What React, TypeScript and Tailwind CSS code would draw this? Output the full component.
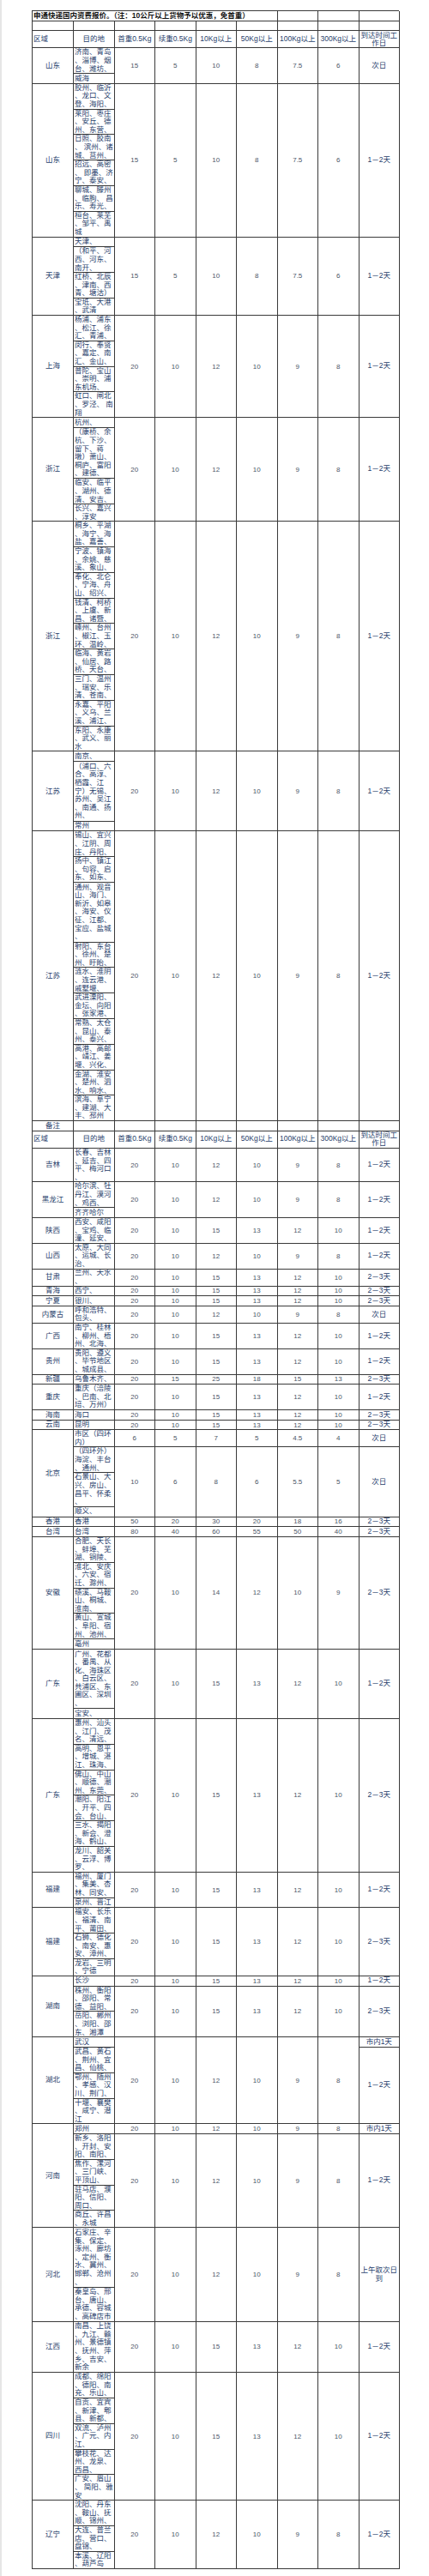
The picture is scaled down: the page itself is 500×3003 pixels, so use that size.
import React from "react";

type Box = string[];

interface SubRow {
  boxes: Box[];
  values: string[];
  timeSplit?: [string, string];
}

interface Section {
  region: string;
  rows: SubRow[];
}

// height of a destination box by its number of text lines
const boxHeight: Record<number, string> = {
  1: "h-[11.7px]",
  2: "h-[20px]",
  3: "h-[29.8px]",
  4: "h-[39.7px]",
  6: "h-[59.6px]",
  7: "h-[69.6px]",
};

const v = (s: string) => s.split(" ");

const A = v("20 10 12 10 9 8 1－2天");
const B = v("20 10 15 13 12 10 1－2天");
const C = v("20 10 15 13 12 10 2－3天");

const sectionsTop: Section[] = [
  {
    region: "山东",
    rows: [
      {
        boxes: [["济南、青岛", "、淄博、烟", "台、潍坊、"], ["威海"]],
        values: v("15 5 10 8 7.5 6 次日"),
      },
    ],
  },
  {
    region: "山东",
    rows: [
      {
        boxes: [
          ["胶州、临沂", "、龙口、文", "登、海阳、"],
          ["莱阳、枣庄", "、安丘、德", "州、东营、"],
          ["日照、胶南", "、 滨州、诸", "城、莒州、"],
          ["招远、高密", "、 即墨、济", "宁、泰安、"],
          ["聊城、滕州", "、临朐、 昌", "乐、寿光、"],
          ["桓台、莱芜", "、邹平、禹", "城"],
        ],
        values: v("15 5 10 8 7.5 6 1－2天"),
      },
    ],
  },
  {
    region: "天津",
    rows: [
      {
        boxes: [
          ["天津、"],
          ["（和平、河", "西、河东、", "南开、"],
          ["红桥、北辰", "、津南、西", "青、塘沽）"],
          ["宝坻、大港", "、武清"],
        ],
        values: v("15 5 10 8 7.5 6 1－2天"),
      },
    ],
  },
  {
    region: "上海",
    rows: [
      {
        boxes: [
          ["杨浦、浦东", "、松江、徐", "汇、青浦、"],
          ["闵行、奉贤", "、嘉定、南", "汇、金山、"],
          ["普陀、宝山", "、崇明、浦", "东机场、"],
          ["虹口、闸北", "、罗泾、 南", "翔"],
        ],
        values: A,
      },
    ],
  },
  {
    region: "浙江",
    rows: [
      {
        boxes: [
          ["杭州、"],
          ["（康桥、余", "杭、下沙、", "留下、蒋", "墩）萧山、", "桐庐、富阳", "、建德、"],
          ["临安、临平", "、湖州、德", "清、安吉、"],
          ["长兴、嘉兴", "、淳安"],
        ],
        values: A,
      },
    ],
  },
  {
    region: "浙江",
    rows: [
      {
        boxes: [
          ["桐乡、平湖", "、海宁、海", "盐、嘉善、"],
          ["宁波、镇海", "、余姚、慈", "溪、象山、"],
          ["奉化、北仑", "、宁海、舟", "山、绍兴、"],
          ["钱清、柯桥", "、上虞、新", "昌、诸暨、"],
          ["嵊州、台州", "、椒江、玉", "环、温岭、"],
          ["临海、黄岩", "、仙居、路", "桥、天台、"],
          ["三门、温州", "、瑞安、乐", "清、苍南、"],
          ["永嘉、平阳", "、义乌、兰", "溪、浦江、"],
          ["东阳、永康", "、武义、丽", "水"],
        ],
        values: A,
      },
    ],
  },
  {
    region: "江苏",
    rows: [
      {
        boxes: [
          ["南京、"],
          ["（浦口、六", "合、高淳、", "栖霞、江", "宁）无锡、", "苏州、吴江", "、南通、扬", "州、"],
          ["常州"],
        ],
        values: A,
      },
    ],
  },
  {
    region: "江苏",
    rows: [
      {
        boxes: [
          ["锡山、宜兴", "、江阴、周", "庄、丹阳、"],
          ["扬中、镇江", "、句容、启", "东、如东、"],
          ["通州、观音", "山、海门、", "新沂、如皋", "、海安、仪", "征、江都、", "宝应、盐城", "、"],
          ["射阳、东台", "、徐州、楚", "州、盱眙、"],
          ["涟水、淮阴", "、连云港、", "戚墅堰、"],
          ["武进溧阳、", "金坛、向阳", "、张家港、"],
          ["常熟、太仓", "、昆山、泰", "州、泰兴、"],
          ["高港、高邮", "、靖江、姜", "堰、兴化、"],
          ["金湖、淮安", "、楚州、泗", "水、响水、"],
          ["滨海、阜宁", "、建湖、大", "丰、邳州"],
        ],
        values: A,
      },
    ],
  },
];

const sectionsBottom: Section[] = [
  { region: "吉林", rows: [{ boxes: [["长春、吉林", "、延吉、四", "平、梅河口", "、"]], values: A }] },
  {
    region: "黑龙江",
    rows: [{ boxes: [["哈尔滨、牡", "丹江、漠河", "、鸡西、"], ["齐齐哈尔"]], values: A }],
  },
  { region: "陕西", rows: [{ boxes: [["西安、咸阳", "、宝鸡、临", "潼、延安、"]], values: B }] },
  { region: "山西", rows: [{ boxes: [["太原、大同", "、运城、长", "治、"]], values: A }] },
  { region: "甘肃", rows: [{ boxes: [["兰州、天水", "、"]], values: C }] },
  { region: "青海", rows: [{ boxes: [["西宁、"]], values: C }] },
  { region: "宁夏", rows: [{ boxes: [["银川、"]], values: C }] },
  { region: "内蒙古", rows: [{ boxes: [["呼和浩特、", "包头、"]], values: v("20 10 12 10 9 8 次日") }] },
  { region: "广西", rows: [{ boxes: [["南宁、桂林", "、柳州、梧", "州、北海、"]], values: B }] },
  { region: "贵州", rows: [{ boxes: [["贵阳、遵义", "、毕节地区", "、城成县、"]], values: B }] },
  { region: "新疆", rows: [{ boxes: [["乌鲁木齐、"]], values: v("20 15 25 18 15 13 2－3天") }] },
  { region: "重庆", rows: [{ boxes: [["重庆（涪陵", "、巴南、北", "培、万州）"]], values: B }] },
  { region: "海南", rows: [{ boxes: [["海口"]], values: C }] },
  { region: "云南", rows: [{ boxes: [["昆明"]], values: C }] },
  {
    region: "北京",
    rows: [
      { boxes: [["市区（四环", "内）"]], values: v("6 5 7 5 4.5 4 次日") },
      {
        boxes: [
          ["（四环外）", "海淀、丰台", "、通州、"],
          ["石景山、大", "兴、房山、", "昌平、怀柔", "、"],
          ["顺义、"],
        ],
        values: v("10 6 8 6 5.5 5 次日"),
      },
    ],
  },
  { region: "香港", rows: [{ boxes: [["香港"]], values: v("50 20 30 20 18 16 2－3天") }] },
  { region: "台湾", rows: [{ boxes: [["台湾"]], values: v("80 40 60 55 50 40 2－3天") }] },
  {
    region: "安徽",
    rows: [
      {
        boxes: [
          ["合肥、天长", "、蚌埠、芜", "湖、铜陵、"],
          ["淮北、安庆", "、六安、宿", "迁、滁州、"],
          ["绩溪、马鞍", "山、桐城、", "淮南、"],
          ["黄山、宣城", "、阜阳、宿", "州、池州、"],
          ["亳州"],
        ],
        values: v("20 10 14 12 10 9 2－3天"),
      },
    ],
  },
  {
    region: "广东",
    rows: [
      {
        boxes: [
          ["广州、花都", "、番禺、从", "化、海珠区", "、白云区、", "共浦区、东", "圃区、深圳", "、"],
          ["宝安、"],
        ],
        values: B,
      },
    ],
  },
  {
    region: "广东",
    rows: [
      {
        boxes: [
          ["惠州、汕头", "、江门、茂", "名、清远、"],
          ["高明、恩平", "、增城、湛", "江、珠海、"],
          ["佛山、中山", "、顺德、潮", "州、东莞、"],
          ["潮阳、阳江", "、开平、四", "会、台山、"],
          ["三水、揭阳", "、新会、澄", "海、鹤山、"],
          ["龙川、韶关", "、云浮、博", "罗、"],
        ],
        values: C,
      },
    ],
  },
  {
    region: "福建",
    rows: [{ boxes: [["福州、厦门", "、集美、杏", "林、同安、"], ["泉州、晋江"]], values: B }],
  },
  {
    region: "福建",
    rows: [
      {
        boxes: [
          ["福安、长乐", "、福清、南", "平、莆田、"],
          ["石狮、德化", "、南安、惠", "安、漳州、"],
          ["龙岩、三明", "、宁德"],
        ],
        values: C,
      },
    ],
  },
  {
    region: "湖南",
    rows: [
      { boxes: [["长沙"]], values: B },
      {
        boxes: [
          ["株州、衡阳", "、邵阳、常", "德、益阳、"],
          ["岳阳、郴州", "、浏阳、邵", "东、湘潭"],
        ],
        values: C,
      },
    ],
  },
  {
    region: "湖北",
    rows: [
      {
        boxes: [
          ["武汉"],
          ["武昌、黄石", "、荆州、宜", "昌、仙桃、"],
          ["鄂州、随州", "、孝感、汉", "川、荆门、"],
          ["十堰、襄樊", "、咸宁、潜", "江"],
        ],
        values: A,
        timeSplit: ["市内1天", "1－2天"],
      },
    ],
  },
  {
    region: "河南",
    rows: [
      { boxes: [["郑州"]], values: v("20 10 12 10 9 8 市内1天") },
      {
        boxes: [
          ["新乡、洛阳", "、开封、安", "阳、南阳、"],
          ["焦作、漯河", "、三门峡、", "平顶山、"],
          ["驻马店、濮", "阳、信阳、", "周口、"],
          ["商丘、许昌", "、永城"],
        ],
        values: A,
      },
    ],
  },
  {
    region: "河北",
    rows: [
      {
        boxes: [
          ["石家庄、辛", "集、保定、", "涿州、廊坊", "、定州、衡", "水、冀州、", "邯郸、沧州", "、"],
          ["秦皇岛、邢", "台、唐山、", "承德、容城", "、高碑店市"],
        ],
        values: v("20 10 12 10 9 8 上午取次日到"),
      },
    ],
  },
  {
    region: "江西",
    rows: [
      {
        boxes: [["南昌、上饶", "、九江、赣", "州、景德镇", "、抚州、萍", "乡、吉安、", "新余"]],
        values: B,
      },
    ],
  },
  {
    region: "四川",
    rows: [
      {
        boxes: [
          ["成都、绵阳", "、德阳、南", "充、乐山、"],
          ["自贡、宜宾", "、新津、郫", "县、新都、"],
          ["双流、泸州", "、广元、内", "江、"],
          ["攀枝花、达", "州、龙泉、", "西昌、"],
          ["广安、眉山", "、 简阳、雅", "安"],
        ],
        values: B,
      },
    ],
  },
  {
    region: "辽宁",
    rows: [
      {
        boxes: [
          ["沈阳、丹东", "、鞍山、抚", "顺、锦州、"],
          ["大连、普兰", "店、营口、", "盘锦、"],
          ["本溪、辽阳", "、葫芦岛"],
        ],
        values: A,
      },
    ],
  },
];

const cell = "border-r border-b border-[#3a3a3a] overflow-hidden";
const col1 = "w-[48px] shrink-0";
const col = "w-[47.5px] shrink-0";
const numText = "text-[8px] leading-[9px] text-[#4a5566]";
const cjkText = "text-[8.5px] leading-[9.6px] text-[#27406b]";

const headers = ["首重0.5Kg", "续重0.5Kg", "10Kg以上", "50Kg以上", "100Kg以上", "300Kg以上"];

const HeaderRow: React.FC = () => (
  <div className="flex h-[20px]">
    <div className={`${col1} ${cell} ${cjkText} flex items-center pl-[1px]`}>区域</div>
    <div className={`${col} ${cell} ${cjkText} flex items-center justify-center`}>目的地</div>
    {headers.map((h) => (
      <div key={h} className={`${col} ${cell} ${cjkText} flex items-center justify-center whitespace-nowrap`}>
        {h}
      </div>
    ))}
    <div className={`${col} ${cell} text-[8.5px] leading-[9px] text-[#27406b] flex flex-col items-center justify-center`}>
      <span>到达时间工</span>
      <span>作日</span>
    </div>
  </div>
);

const ValueCell: React.FC<{ text: string }> = ({ text }) => {
  const isNum = /^[0-9.]+$/.test(text);
  const lines = text === "上午取次日到" ? ["上午取次日", "到"] : [text];
  return (
    <div className={`${col} ${cell} ${isNum ? numText : cjkText} flex flex-col items-center justify-center`}>
      {lines.map((l) => (
        <span key={l} className="whitespace-nowrap">
          {l}
        </span>
      ))}
    </div>
  );
};

const SectionBlock: React.FC<{ s: Section }> = ({ s }) => (
  <div className="flex">
    <div className={`${col1} ${cell} ${cjkText} flex items-center justify-center`}>{s.region}</div>
    <div className="flex flex-col">
      {s.rows.map((r, i) => (
        <div key={i} className="flex">
          <div className={`${col} flex flex-col`}>
            {r.boxes.map((b, j) => (
              <div
                key={j}
                className={`${boxHeight[b.length]} ${cell} ${cjkText} flex flex-col justify-center pl-[1px]`}
              >
                {b.map((line, k) => (
                  <span key={k} className="whitespace-pre">
                    {line}
                  </span>
                ))}
              </div>
            ))}
          </div>
          {r.values.slice(0, 6).map((val, k) => (
            <ValueCell key={k} text={val} />
          ))}
          {r.timeSplit ? (
            <div className={`${col} flex flex-col`}>
              <div className={`${boxHeight[1]} ${cell} ${cjkText} flex items-center justify-center`}>
                {r.timeSplit[0]}
              </div>
              <div className={`flex-1 ${cell} ${cjkText} flex items-center justify-center`}>{r.timeSplit[1]}</div>
            </div>
          ) : (
            <ValueCell text={r.values[6]} />
          )}
        </div>
      ))}
    </div>
  </div>
);

const EmptyCells: React.FC<{ count: number }> = ({ count }) => (
  <>
    {Array.from({ length: count }).map((_, i) => (
      <div key={i} className={`${col} ${cell}`} />
    ))}
  </>
);

const App: React.FC = () => {
  return (
    <div className="min-h-[3003px] bg-white border-l-2 border-[#e6e6e6] pl-[35px] pt-[12px] font-['Liberation_Sans','Noto_Sans_CJK_SC',sans-serif]">
      <div className="w-[428px] border-t border-l border-[#3a3a3a]">
        {/* title */}
        <div className="flex h-[11.7px]">
          <div
            className={`w-[285.5px] shrink-0 ${cell} flex items-center pl-[1px] text-[8.5px] leading-[9.6px] font-bold text-[#111] whitespace-nowrap`}
          >
            申通快递国内资费报价。（注：10公斤以上货物予以优惠，免首重）
          </div>
          <EmptyCells count={3} />
        </div>
        <div className="flex h-[11.7px]">
          <div className={`${col1} ${cell}`} />
          <EmptyCells count={8} />
        </div>
        <HeaderRow />

        {sectionsTop.map((s, i) => (
          <SectionBlock key={i} s={s} />
        ))}

        {/* remarks */}
        <div className="flex h-[11.7px]">
          <div className={`${col1} ${cell} ${cjkText} flex items-center justify-center`}>备注</div>
          <EmptyCells count={8} />
        </div>
        <HeaderRow />

        {sectionsBottom.map((s, i) => (
          <SectionBlock key={i} s={s} />
        ))}
      </div>
    </div>
  );
};

export default App;
